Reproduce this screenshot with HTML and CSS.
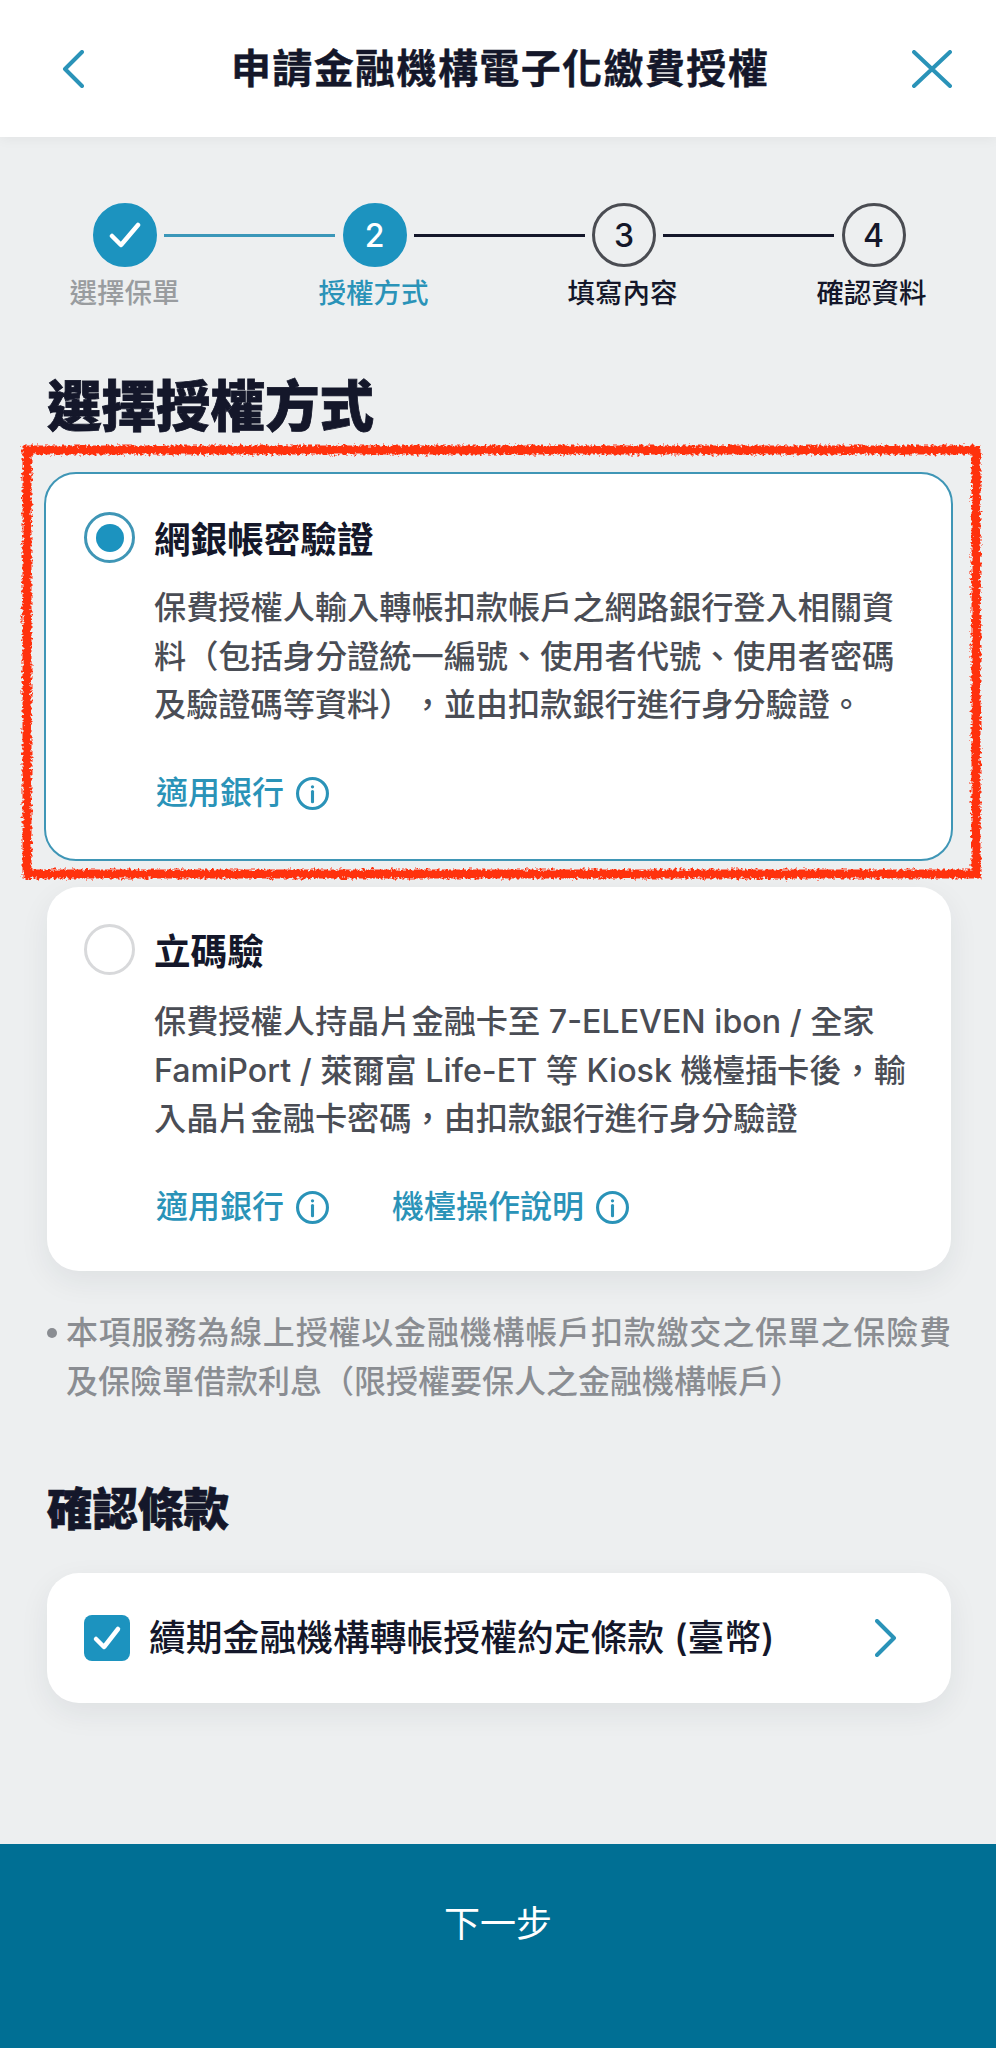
FILE: index.html
```html
<!DOCTYPE html>
<html lang="zh-Hant">
<head>
<meta charset="utf-8">
<title>申請金融機構電子化繳費授權</title>
<link rel="stylesheet" href="styles.css">
</head>
<body>
<div class="app">
  <header class="topbar">
    <svg class="top-icon back" viewBox="0 0 22 38"><path d="M20 2 3 19l17 17"/></svg>
    <h1 class="top-title">申請金融機構電子化繳費授權</h1>
    <svg class="top-icon close" viewBox="0 0 40 38"><path d="M2 2l36 34M38 2 2 36"/></svg>
  </header>

  <main class="content">
    <div class="stepper">
      <div class="step-track">
        <span class="dot dot-on"><svg class="dot-check" viewBox="0 0 32 26"><path d="M3 14l9 9L29 3"/></svg></span>
        <span class="bar bar-on"></span>
        <span class="dot dot-on">2</span>
        <span class="bar"></span>
        <span class="dot">3</span>
        <span class="bar"></span>
        <span class="dot">4</span>
      </div>
      <div class="step-labels">
        <span class="lbl lbl-done">選擇保單</span>
        <span class="lbl lbl-now">授權方式</span>
        <span class="lbl">填寫內容</span>
        <span class="lbl">確認資料</span>
      </div>
    </div>

    <h2 class="h-main">選擇授權方式</h2>

    <section class="card card-sel">
      <div class="opt-head">
        <span class="radio radio-on"></span>
        <h3 class="opt-title">網銀帳密驗證</h3>
      </div>
      <p class="opt-desc">保費授權人輸入轉帳扣款帳戶之網路銀行登入相關資料（包括身分證統一編號、使用者代號、使用者密碼及驗證碼等資料），並由扣款銀行進行身分驗證。</p>
      <div class="opt-links">
        <a class="link">適用銀行<svg class="info" viewBox="0 0 32 32"><circle cx="16" cy="16" r="14.5"/><path d="M16 14v10"/><circle class="info-dot" cx="16" cy="9.5" r="1.6"/></svg></a>
      </div>
    </section>

    <section class="card card-plain">
      <div class="opt-head">
        <span class="radio"></span>
        <h3 class="opt-title">立碼驗</h3>
      </div>
      <p class="opt-desc">保費授權人持晶片金融卡至 7-ELEVEN ibon / 全家 FamiPort / 萊爾富 Life-ET 等 Kiosk 機檯插卡後，輸入晶片金融卡密碼，由扣款銀行進行身分驗證</p>
      <div class="opt-links">
        <a class="link">適用銀行<svg class="info" viewBox="0 0 32 32"><circle cx="16" cy="16" r="14.5"/><path d="M16 14v10"/><circle class="info-dot" cx="16" cy="9.5" r="1.6"/></svg></a>
        <a class="link">機檯操作說明<svg class="info" viewBox="0 0 32 32"><circle cx="16" cy="16" r="14.5"/><path d="M16 14v10"/><circle class="info-dot" cx="16" cy="9.5" r="1.6"/></svg></a>
      </div>
    </section>

    <ul class="note">
      <li>本項服務為線上授權以金融機構帳戶扣款繳交之保單之保險費及保險單借款利息（限授權要保人之金融機構帳戶）</li>
    </ul>

    <h2 class="h-sub">確認條款</h2>

    <section class="card terms">
      <span class="checkbox"><svg viewBox="0 0 30 26"><path d="M4 14l8 8L26 4"/></svg></span>
      <span class="terms-text">續期金融機構轉帳授權約定條款 (臺幣)</span>
      <svg class="terms-arrow" viewBox="0 0 22 38"><path d="M2 2l17 17L2 36"/></svg>
    </section>
  </main>

  <footer class="next">下一步</footer>

  <svg class="scribble" viewBox="0 0 996 460" aria-hidden="true">
    <defs>
      <filter id="rough" x="-2%" y="-5%" width="104%" height="110%">
        <feTurbulence type="fractalNoise" baseFrequency="0.35" numOctaves="2" seed="4"/>
        <feDisplacementMap in="SourceGraphic" scale="7"/>
      </filter>
    </defs>
    <rect x="27" y="20" width="949" height="424" fill="none" stroke="#ff3210" stroke-width="9" filter="url(#rough)"/>
  </svg>
</div>
</body>
</html>
```

FILE: styles.css
```css
* { box-sizing: border-box; }
html, body { margin: 0; padding: 0; }
body {
  font-family: Inter, "Noto Sans CJK TC", sans-serif;
  background: #edeff0;
  color: #14172a;
  text-spacing-trim: space-all;
}
.app {
  position: relative;
  width: 996px;
  height: 2048px;
  display: flex;
  flex-direction: column;
  overflow: hidden;
}

/* top bar */
.topbar {
  height: 137px;
  flex: none;
  background: #fff;
  display: flex;
  align-items: center;
  justify-content: space-between;
  padding: 0 44px 0 62px;
  box-shadow: 0 2px 12px rgba(0, 0, 0, .05);
  position: relative;
}
.top-icon { fill: none; stroke: #2a93b8; stroke-width: 4; stroke-linecap: round; stroke-linejoin: round; }
.back { width: 22px; height: 38px; }
.close { width: 40px; height: 38px; }
.top-title {
  margin: 0 0 0 4px;
  font-size: 40px;
  letter-spacing: 1.4px;
  line-height: 56px;
  font-weight: 700;
  color: #14172a;
  -webkit-text-stroke: .4px #14172a;
}

/* main */
.content { flex: 1; padding: 0 45px 0 47px; }

.stepper { margin: 66px -45px 0 -47px; }
.step-track { display: flex; align-items: center; padding-left: 93px; }
.dot {
  width: 64px;
  height: 64px;
  flex: none;
  border-radius: 50%;
  border: 3px solid #4a4c52;
  display: flex;
  align-items: center;
  justify-content: center;
  font-size: 32px;
  font-weight: 500;
  color: #14172a;
}
.dot-on { background: #1c93bf; border-color: #1c93bf; color: #fff; }
.dot-check { width: 32px; height: 26px; fill: none; stroke: #fff; stroke-width: 4.5; stroke-linecap: round; stroke-linejoin: round; }
.bar { width: 171px; height: 3px; margin: 0 7.25px; background: #14172a; flex: none; }
.bar-on { background: #3b97b9; }
.step-labels {
  display: grid;
  grid-template-columns: repeat(4, 249px);
  margin-top: 8px;
  text-align: center;
}
.lbl { font-size: 27.5px; line-height: 36px; font-weight: 500; color: #14172a; }
.lbl-done { color: #999c9f; }
.lbl-now { color: #2a93b8; }

.h-main {
  margin: 65px 0 0;
  font-size: 54.5px;
  line-height: 60px;
  font-weight: 900;
  -webkit-text-stroke: .8px #14172a;
}

/* cards */
.card { background: #fff; border-radius: 32px; }
.card-sel {
  margin: 36px -2px 0 -3px;
  height: 389px;
  border: 2px solid #3f96b6;
  padding: 38px 0 0 38px;
}
.card-plain {
  margin-top: 26px;
  height: 384px;
  padding: 37px 0 0 37px;
  box-shadow: 0 10px 30px rgba(30, 40, 60, .07);
}
.opt-head { display: flex; align-items: center; gap: 19px; }
.radio {
  width: 51px;
  height: 51px;
  flex: none;
  border-radius: 50%;
  border: 3px solid #d8d9db;
  display: flex;
  align-items: center;
  justify-content: center;
}
.radio-on { border-color: #3f96b6; }
.radio-on::after {
  content: "";
  width: 28px;
  height: 28px;
  border-radius: 50%;
  background: #1c93bf;
}
.opt-title { margin: 4px 0 0; font-size: 36.6px; line-height: 46px; font-weight: 700; }
.opt-desc {
  margin: 21px 0 0 70px;
  width: 760px;
  font-size: 32.2px;
  line-height: 48.7px;
  color: #4a4d55;
  font-weight: 500;
}
.card-plain .opt-desc { margin-top: 23px; }
.opt-links { display: flex; gap: 63px; margin: 46px 0 0 72px; }
.link {
  display: flex;
  align-items: center;
  gap: 12px;
  font-size: 32px;
  line-height: 34px;
  font-weight: 500;
  color: #2a93b8;
}
.info { width: 33px; height: 33px; fill: none; stroke: #2a93b8; stroke-width: 3; stroke-linecap: round; }
.info-dot { fill: #2a93b8; stroke: none; }

.note {
  list-style: none;
  margin: 38px 0 0;
  padding: 0 0 0 19px;
  position: relative;
  font-size: 32px;
  line-height: 48.5px;
  color: #8a8d92;
  font-weight: 500;
  text-align: justify;
}
.note::before {
  content: "";
  position: absolute;
  left: 0;
  top: 19px;
  width: 10px;
  height: 10px;
  border-radius: 50%;
  background: #8a8d92;
}

.h-sub {
  margin: 79px 0 0;
  font-size: 45.5px;
  line-height: 50px;
  font-weight: 900;
  -webkit-text-stroke: .7px #14172a;
}

.terms {
  margin-top: 37.5px;
  height: 130px;
  display: flex;
  align-items: center;
  padding: 0 54px 0 37px;
  box-shadow: 0 10px 30px rgba(30, 40, 60, .07);
}
.checkbox {
  width: 46px;
  height: 46px;
  flex: none;
  border-radius: 8px;
  background: #1c93bf;
  display: flex;
  align-items: center;
  justify-content: center;
}
.checkbox svg { width: 30px; height: 26px; fill: none; stroke: #fff; stroke-width: 4.5; stroke-linecap: round; stroke-linejoin: round; }
.terms-text { margin-left: 19px; flex: 1; font-size: 36.8px; line-height: 44px; font-weight: 500; color: #14172a; }
.terms-arrow { width: 22px; height: 38px; fill: none; stroke: #2a93b8; stroke-width: 4; stroke-linecap: round; stroke-linejoin: round; }

.next {
  height: 204px;
  flex: none;
  background: #006f94;
  color: #fff;
  font-size: 36px;
  font-weight: 400;
  display: flex;
  align-items: center;
  justify-content: center;
  padding-bottom: 50px;
}

.scribble {
  position: absolute;
  left: 0;
  top: 430px;
  width: 996px;
  height: 460px;
  pointer-events: none;
}
```
